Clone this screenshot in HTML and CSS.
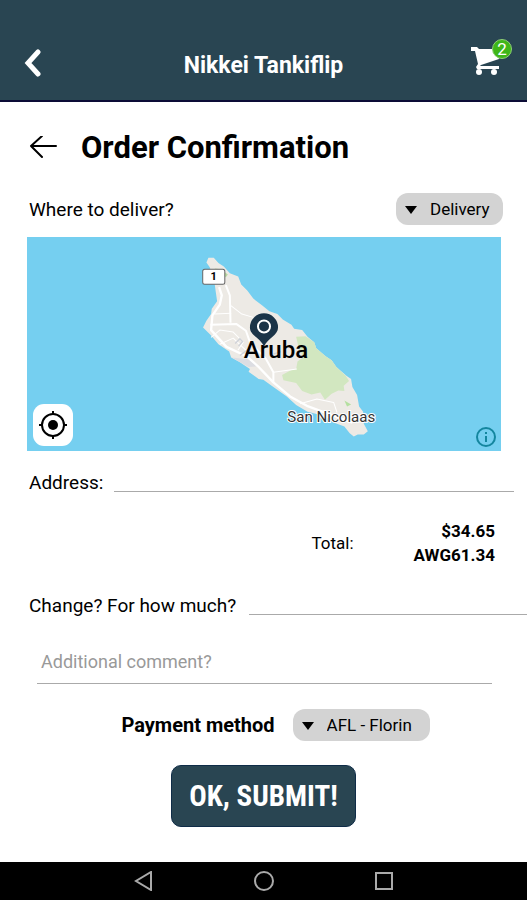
FILE: index.html
```
<!DOCTYPE html>
<html lang="en">
<head>
  <meta charset="UTF-8" />
  <meta name="viewport" content="width=device-width, initial-scale=1" />
  <title>Nikkei Tankiflip</title>
  <link rel="stylesheet" href="styles.css">
</head>
<body>

  <header class="topbar">
    <button class="icon-btn" aria-label="Back">
      <svg width="20" height="30" viewBox="0 0 20 30"><path d="M14 5L4 16L14 27" fill="none" stroke="#fff" stroke-width="5" stroke-linecap="round" stroke-linejoin="miter"/></svg>
    </button>
    <h1>Nikkei Tankiflip</h1>
    <button class="icon-btn cart" aria-label="Cart">
      <svg width="32" height="30" viewBox="0 0 32 30">
        <path d="M0 0H6L8 2H30L28 12L10 18L9 19H28V22H6L5 20L7 17L4 4H0Z" fill="#fff"/>
        <circle cx="8" cy="25" r="3" fill="#fff"/>
        <circle cx="23" cy="25" r="3" fill="#fff"/>
      </svg>
      <span class="badge">2</span>
    </button>
  </header>

  <main>
    <div class="title">
      <button class="icon-btn" aria-label="Go back">
        <svg width="28" height="24" viewBox="0 0 28 24"><path d="M27 10H2M13 0L2 10L13 21" fill="none" stroke="#000" stroke-width="2" stroke-linecap="round" stroke-linejoin="round"/></svg>
      </button>
      <h2>Order Confirmation</h2>
    </div>

    <div class="row deliver">
      <label for="deliver">Where to deliver?</label>
      <span class="select">
        <select id="deliver">
          <option>Delivery</option>
        </select>
      </span>
    </div>

    <div class="map">
      <svg class="map-canvas" viewBox="0 0 474 213" preserveAspectRatio="xMidYMid slice">
        <!-- island -->
        <svg x="163" y="8" width="200" height="200" viewBox="0 0 600 600">
          <path d="M50 52L56 38L72 38L86 54L102 64L120 84L145 94L154 118L172 136L190 160L216 180L238 198L262 206L278 222L304 238L312 250L336 254L352 274L372 290L378 308L406 332L424 344L438 364L468 390L482 400L486 424L500 448L506 482L518 498L520 534L532 556L520 566L502 566L490 572L478 562L462 542L430 530L400 510L352 498L318 478L290 452L250 424L220 402L206 400L198 394L176 378L180 370L150 350L124 336L118 318L86 296L62 268L40 246L50 226L64 206L66 190L82 168L78 140L74 110L60 66Z" fill="#edeae5"/>
          <path d="M74 70L94 72L114 88L108 96L90 80Z" fill="#b8d8a0"/>
          <path d="M318 274L346 272L372 290L378 308L406 332L424 344L438 364L466 390L476 406L460 420L462 436L444 434L424 444L404 462L390 440L364 446L336 436L318 412L280 404L276 388L302 374L318 370L322 348L340 334L326 310Z" fill="#d2e7c0"/>
          <path d="M462 464L482 476L470 482Z" fill="#b4e0a0"/>
          <path d="M126 336L180 342L204 362L176 364Z" fill="#dcdde2"/>
          <g fill="none" stroke="#fff" stroke-linejoin="round">
            <path d="M88 126L96 150L90 178L68 210L64 254L110 304L170 332L204 362L250 410L300 452L350 480L420 506L486 530" stroke-width="7"/>
            <path d="M108 120L120 150L122 232M62 238L140 236L168 256L180 290L228 340L250 380L250 410" stroke-width="6"/>
            <path d="M74 206L124 204M122 180L156 206L190 216M64 276L90 254L130 260L160 290L144 314M90 296L130 278L170 316M250 380L320 370M330 474L380 460L430 470L440 500" stroke-width="3"/>
          </g>
          <path d="M136 294L150 280L158 288L146 302M150 330L174 312M250 326L272 318" fill="none" stroke="#cfd2d8" stroke-width="4"/>
        </svg>
        <!-- road shield -->
        <rect x="176" y="32" width="22" height="15" rx="2" fill="#fff" stroke="#666"/>
        <text class="shield" x="187" y="43">1</text>
        <text class="place" x="249" y="120">Aruba</text>
        <text class="town" x="304" y="184">San Nicolaas</text>
        <!-- pin -->
        <path d="M237 109C233 100 223 98 223 90A14 14 0 0 1 251 90C251 98 241 100 237 109Z" fill="#1b3448"/>
        <circle cx="237" cy="89" r="6" fill="none" stroke="#fff" stroke-width="2"/>
      </svg>
      <button class="locate" aria-label="My location">
        <svg width="30" height="30" viewBox="0 0 30 30">
          <circle cx="15" cy="15" r="11" fill="none" stroke="#000" stroke-width="2"/>
          <circle cx="15" cy="15" r="5" fill="#000"/>
          <path d="M15 1V5M15 25V29M1 15H5M25 15H29" stroke="#000" stroke-width="2"/>
        </svg>
      </button>
      <button class="info" aria-label="Map info">
        <svg width="20" height="20" viewBox="0 0 20 20">
          <circle cx="10" cy="10" r="9" fill="none" stroke="#14869f" stroke-width="2"/>
          <path d="M10 5V7M10 9V15" stroke="#14869f" stroke-width="2"/>
        </svg>
      </button>
    </div>

    <div class="row address">
      <label for="address">Address:</label>
      <input type="text" id="address" />
    </div>

    <div class="total">
      <span>Total:</span>
      <div class="amounts">
        <div>$34.65</div>
        <div>AWG61.34</div>
      </div>
    </div>

    <div class="row change">
      <label for="change">Change? For how much?</label>
      <input type="text" id="change" />
    </div>

    <input type="text" class="comment" placeholder="Additional comment?" aria-label="Additional comment?" />

    <div class="payment">
      <label for="payment">Payment method</label>
      <span class="select">
        <select id="payment">
          <option>AFL - Florin</option>
        </select>
      </span>
    </div>

    <button class="submit">OK, SUBMIT!</button>
  </main>

  <nav class="navbar">
    <button class="icon-btn" aria-label="Back"><svg width="20" height="20" viewBox="0 0 20 20"><path d="M17 1V19L2 10Z"/></svg></button>
    <button class="icon-btn" aria-label="Home"><svg width="20" height="20" viewBox="0 0 20 20"><circle cx="10" cy="10" r="9"/></svg></button>
    <button class="icon-btn" aria-label="Recent apps"><svg width="20" height="20" viewBox="0 0 20 20"><path d="M2 2H18V18H2Z"/></svg></button>
  </nav>

</body>
</html>
```
FILE: styles.css
```
* {
  box-sizing: border-box;
}
body {
  margin: 0;
  min-height: 100vh;
  display: flex;
  flex-direction: column;
  background: #fff;
  color: #000;
  font-family: Roboto, sans-serif;
  font-size: 19px;
}
h1, h2 {
  margin: 0;
}
button, input, select {
  font-family: inherit;
  color: inherit;
}
svg {
  display: block;
}
.icon-btn {
  padding: 0;
  border: none;
  background: none;
}
.topbar {
  display: grid;
  grid-template-columns: 32px 1fr 32px;
  align-items: center;
  height: 102px;
  padding: 24px 24px 0;
  background: #294552;
  color: #fff;
  border-bottom: 2px solid #0c0c36;
}
.topbar h1 {
  padding-top: 8px;
  font-size: 23px;
  line-height: 26px;
  text-align: center;
}
.cart {
  position: relative;
}
.badge {
  position: absolute;
  top: -8px;
  right: -9px;
  width: 20px;
  height: 20px;
  border-radius: 50%;
  background: #3fb618;
  border: 1px solid #8fce78;
  color: #fff;
  font-size: 17px;
  line-height: 18px;
}
main {
  flex: 1;
  display: flex;
  flex-direction: column;
}
.title {
  display: flex;
  align-items: center;
  gap: 24px;
  padding: 28px 29px 0;
}
.title h2 {
  font-size: 31px;
  line-height: 36px;
}
.row {
  display: flex;
  align-items: center;
  padding-left: 29px;
}
.deliver {
  justify-content: space-between;
  padding-right: 24px;
  margin: 27px 0 12px;
}
.select {
  position: relative;
}
.select::before {
  content: "";
  position: absolute;
  left: 9px;
  top: 13px;
  border: 6px solid transparent;
  border-top: 8px solid #000;
  border-bottom: none;
  pointer-events: none;
}
.select select {
  display: block;
  appearance: none;
  height: 32px;
  padding: 0 13px 0 34px;
  border: none;
  border-radius: 12px;
  background: #d3d3d3;
  font-size: 17px;
}
.map {
  position: relative;
  height: 214px;
  margin: 0 26px 0 27px;
  background: #75cff0;
}
.map-canvas {
  width: 100%;
  height: 100%;
}
.map-canvas text {
  text-anchor: middle;
}
.shield {
  font-size: 11px;
  font-weight: bold;
}
.place {
  font-size: 24px;
  font-weight: 500;
}
.town {
  font-size: 15px;
  fill: #333;
  stroke: #fff;
  stroke-width: 2px;
  paint-order: stroke;
}
.locate {
  position: absolute;
  left: 6px;
  bottom: 5px;
  padding: 6px 5px;
  border: none;
  border-radius: 11px;
  background: #fff;
}
.info {
  position: absolute;
  right: 5px;
  bottom: 4px;
  padding: 0;
  border: none;
  background: none;
}
.row input {
  flex: 1;
  min-width: 0;
  height: 30px;
  padding: 0 4px;
  border: none;
  border-bottom: 1px solid #aaa;
  font-size: 19px;
}
.address {
  gap: 11px;
  padding-right: 13px;
  margin-top: 11px;
}
.address input, .change input {
  margin-bottom: 10px;
}
.total {
  display: flex;
  justify-content: flex-end;
  align-items: center;
  gap: 60px;
  padding-right: 32px;
  margin-top: 17px;
  font-size: 17px;
  line-height: 24px;
}
.amounts {
  font-weight: bold;
  text-align: right;
}
.change {
  gap: 13px;
  margin-top: 18px;
}
.comment {
  height: 44px;
  margin: 15px 35px 0 37px;
  padding: 0 4px;
  border: none;
  border-bottom: 1px solid #aaa;
  font-size: 18px;
}
.comment::placeholder {
  color: #999;
}
.payment {
  display: flex;
  justify-content: center;
  align-items: center;
  gap: 18px;
  margin-top: 25px;
  padding-left: 24px;
}
.payment label {
  font-size: 20px;
  font-weight: bold;
}
.payment select {
  padding-right: 17px;
}
.submit {
  align-self: center;
  height: 62px;
  margin: 24px 0;
  padding: 0 17px;
  border: 1px solid #0f2c48;
  border-radius: 10px;
  background: #294552;
  color: #fff;
  font-family: "Roboto Condensed", "Liberation Sans Narrow", Roboto, sans-serif;
  font-size: 29px;
  font-weight: bold;
}
.navbar {
  display: flex;
  justify-content: center;
  align-items: center;
  gap: 100px;
  height: 38px;
  background: #000;
}
.navbar svg {
  fill: none;
  stroke: #aaa;
  stroke-width: 2px;
}
```
